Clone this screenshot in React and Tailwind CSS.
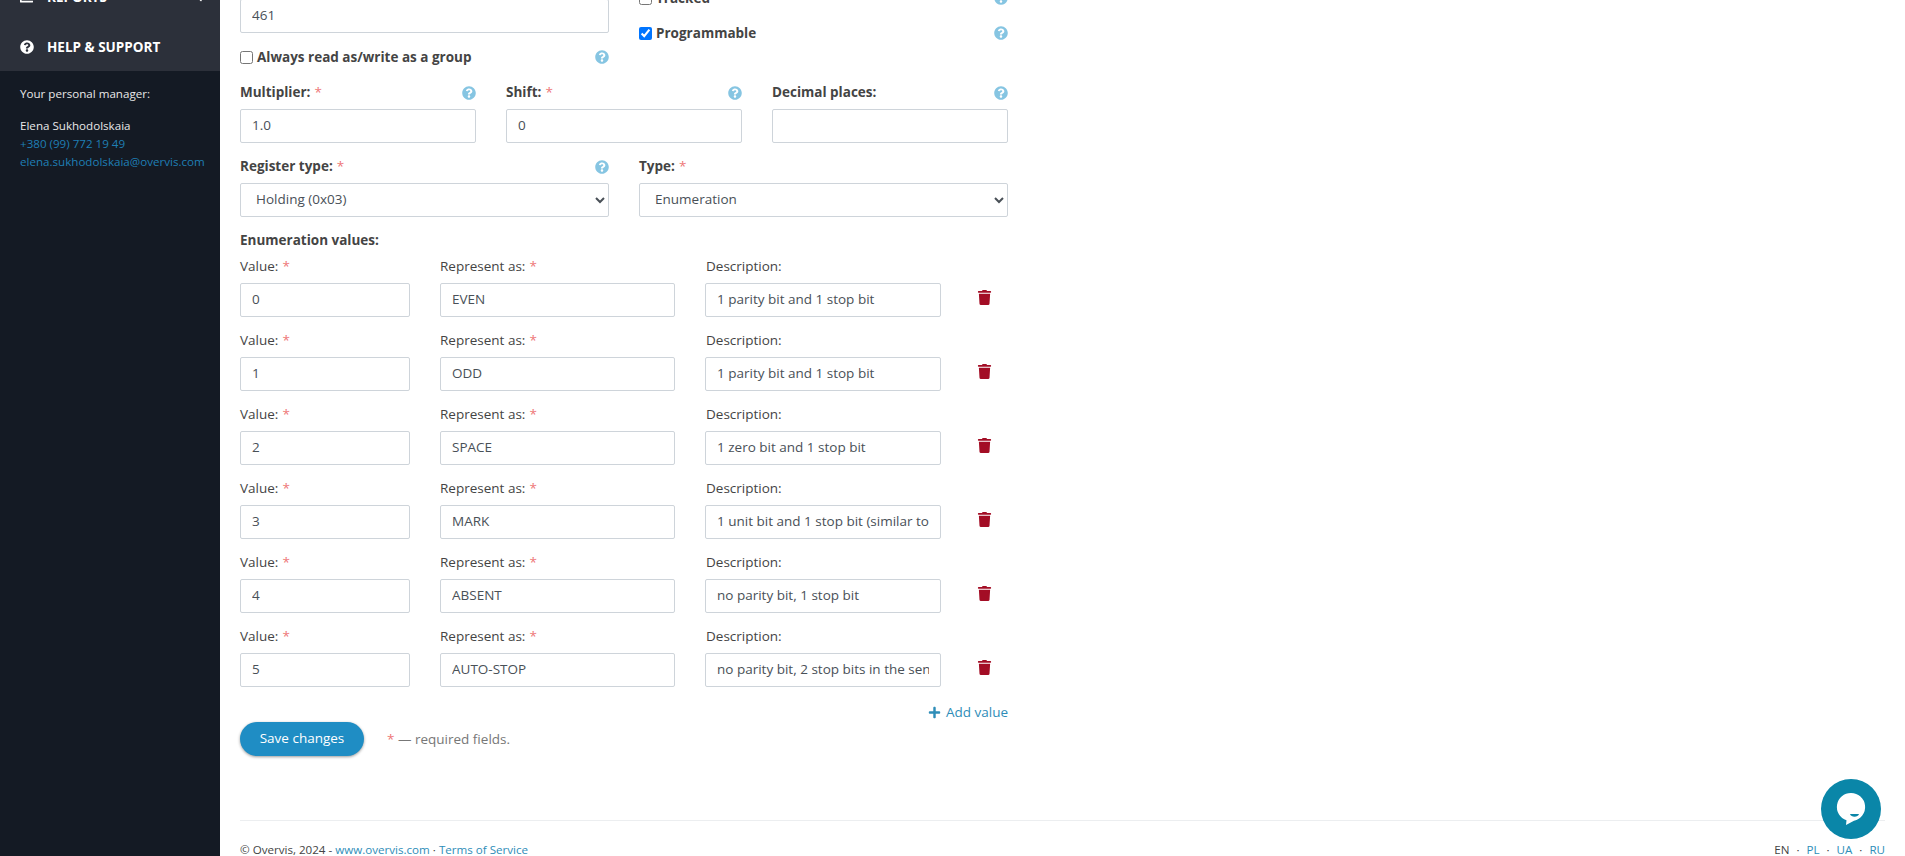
import { FaChartArea, FaChevronLeft, FaPlus, FaQuestionCircle, FaTrash } from "react-icons/fa";

const rows = [
  { value: "0", name: "EVEN", desc: "1 parity bit and 1 stop bit" },
  { value: "1", name: "ODD", desc: "1 parity bit and 1 stop bit" },
  { value: "2", name: "SPACE", desc: "1 zero bit and 1 stop bit" },
  { value: "3", name: "MARK", desc: "1 unit bit and 1 stop bit (similar to" },
  { value: "4", name: "ABSENT", desc: "no parity bit, 1 stop bit" },
  { value: "5", name: "AUTO-STOP", desc: "no parity bit, 2 stop bits in the sen" },
];

const inputCls =
  "block w-full h-[34px] border border-[#ced4da] rounded-[2px] bg-white px-[11px] pb-[2px] text-[13.5px] text-[#495057] outline-none";
const selectCls =
  "block w-full h-[34px] border border-[#ced4da] rounded-[2px] bg-white pl-[11px] pr-1 pb-[2px] text-[13.5px] text-[#495057] outline-none";

function Star() {
  return <span className="text-[#e77] font-normal ml-1">*</span>;
}

function Help() {
  return <FaQuestionCircle className="text-[#86c5e2] text-[14px] shrink-0" />;
}

function FieldLabel({ text, required, help }) {
  return (
    <div className="flex items-center justify-between h-[20px] mb-[6px] font-bold text-[13.5px] text-[#444]">
      <span className="-mt-[1px]">
        {text}
        {required && <Star />}
      </span>
      {help && <Help />}
    </div>
  );
}

function Sidebar() {
  return (
    <aside className="w-[220px] shrink-0 bg-[#141a24] text-white">
      <div className="h-[71px] bg-[#2c303a] px-5 font-bold text-[13.5px]">
        <div className="flex items-center h-[1px] -translate-y-[3px]">
          <FaChartArea className="text-[13px] mr-[14px]" />
          <span>REPORTS</span>
          <FaChevronLeft className="ml-auto -mr-[4px] text-[9px]" />
        </div>
        <div className="flex items-center mt-[36px]">
          <FaQuestionCircle className="text-[14px] mr-[13px]" />
          <span>HELP &amp; SUPPORT</span>
        </div>
      </div>
      <div className="px-5 pt-[14px] text-[11.6px] leading-[18px] text-[#e8e8e8]">
        <div>Your personal manager:</div>
        <div className="mt-[14px]">Elena Sukhodolskaia</div>
        <div className="text-[#1f7fb5]">+380 (99) 772 19 49</div>
        <div className="text-[#1f7fb5]">elena.sukhodolskaia@overvis.com</div>
      </div>
    </aside>
  );
}

function EnumRow({ row }) {
  return (
    <div className="flex items-start h-[74px]">
      <div className="w-[170px] mr-[30px]">
        <div className="h-[20px] mb-[6px] text-[13.5px] text-[#444] -translate-y-[1px]">
          Value:
          <Star />
        </div>
        <input className={inputCls} defaultValue={row.value} />
      </div>
      <div className="w-[235px] mr-[30px]">
        <div className="h-[20px] mb-[6px] text-[13.5px] text-[#444] -translate-y-[1px]">
          Represent as:
          <Star />
        </div>
        <input className={inputCls} defaultValue={row.name} />
      </div>
      <div className="w-[236px]">
        <div className="h-[20px] mb-[6px] pl-px text-[13.5px] text-[#444] -translate-y-[1px]">Description:</div>
        <input className={inputCls} defaultValue={row.desc} />
      </div>
      <FaTrash className="text-[#a30d25] text-[15px] ml-[36px] mt-[33px]" />
    </div>
  );
}

export default function App() {
  return (
    <div className="flex h-[856px] overflow-hidden bg-white font-['Open_Sans',sans-serif]">
      <Sidebar />
      <main className="flex-1 min-w-0 px-5 flex flex-col">
        <div className="w-[768px]">
          <div className="grid grid-cols-2 gap-x-[30px] h-[92px] -mt-[1px]">
            <div>
              <input className={inputCls} defaultValue="461" />
              <label className="flex items-center mt-[14px] h-[20px] font-bold text-[13.5px] text-[#444]">
                <input type="checkbox" className="w-[13px] h-[13px] mr-[4px]" />
                <span className="flex-1">Always read as/write as a group</span>
                <Help />
              </label>
            </div>
            <div>
              <label className="flex items-center h-[20px] -mt-[11px] font-bold text-[13.5px] text-[#444]">
                <input type="checkbox" className="w-[13px] h-[13px] mr-[4px]" />
                <span className="flex-1">Tracked</span>
                <Help />
              </label>
              <label className="flex items-center h-[20px] mt-[15px] font-bold text-[13.5px] text-[#444]">
                <input type="checkbox" defaultChecked className="w-[13px] h-[13px] mr-[4px]" />
                <span className="flex-1">Programmable</span>
                <Help />
              </label>
            </div>
          </div>

          <div className="grid grid-cols-3 gap-x-[30px] h-[74px] -mt-[8px]">
            <div>
              <FieldLabel text="Multiplier:" required help />
              <input className={inputCls} defaultValue="1.0" />
            </div>
            <div>
              <FieldLabel text="Shift:" required help />
              <input className={inputCls} defaultValue="0" />
            </div>
            <div>
              <FieldLabel text="Decimal places:" help />
              <input className={inputCls} />
            </div>
          </div>

          <div className="grid grid-cols-2 gap-x-[30px] h-[74px]">
            <div>
              <FieldLabel text="Register type:" required help />
              <select className={selectCls} defaultValue="Holding (0x03)">
                <option>Holding (0x03)</option>
              </select>
            </div>
            <div>
              <FieldLabel text="Type:" required />
              <select className={selectCls} defaultValue="Enumeration">
                <option>Enumeration</option>
              </select>
            </div>
          </div>

          <div className="h-[20px] mb-[6px] font-bold text-[13.5px] text-[#444] -translate-y-[1px]">Enumeration values:</div>
          {rows.map(row => (
            <EnumRow key={row.value} row={row} />
          ))}

          <div className="flex items-center justify-end h-[20px] text-[13.5px] text-[#2e8db8] mt-[1px]">
            <FaPlus className="text-[13px] mr-[5px]" />
            Add value
          </div>

          <div className="flex items-center">
            <button className="h-[34px] w-[124px] pb-[2px] rounded-full bg-[#1f8dc4] text-white text-[13.5px] shadow-[0_1px_3px_rgba(0,0,0,0.4)]">
              Save changes
            </button>
            <span className="ml-[23px] text-[13.5px] text-[#777]">
              <span className="text-[#e77]">*</span> — required fields.
            </span>
          </div>
        </div>

        <div className="mt-[64px] border-t border-[#eceef0] pt-[22px] flex justify-between text-[11.6px] leading-[14px] text-[#444]">
          <div>
            © Overvis, 2024 - <span className="text-[#2e8db8]">www.overvis.com</span> ·{" "}
            <span className="text-[#2e8db8]">Terms of Service</span>
          </div>
          <div className="flex gap-[7px]">
            <span>EN</span>
            <span>·</span>
            <span className="text-[#2e8db8]">PL</span>
            <span>·</span>
            <span className="text-[#2e8db8]">UA</span>
            <span>·</span>
            <span className="text-[#2e8db8]">RU</span>
          </div>
        </div>
      </main>

      <div className="fixed left-[1821px] top-[779px] w-[60px] h-[60px] rounded-full bg-[#0a86a8]">
        <svg width="60" height="60" viewBox="0 0 60 60">
          <path
            d="M30 14A14 14 0 0 1 33 41.7L25 46L25.5 41.3A14 14 0 0 1 30 14Z"
            fill="#fff"
          />
          <path d="M29 35H38C37 38.5 30 38.5 29 35Z" fill="#0a86a8" />
        </svg>
      </div>
    </div>
  );
}
